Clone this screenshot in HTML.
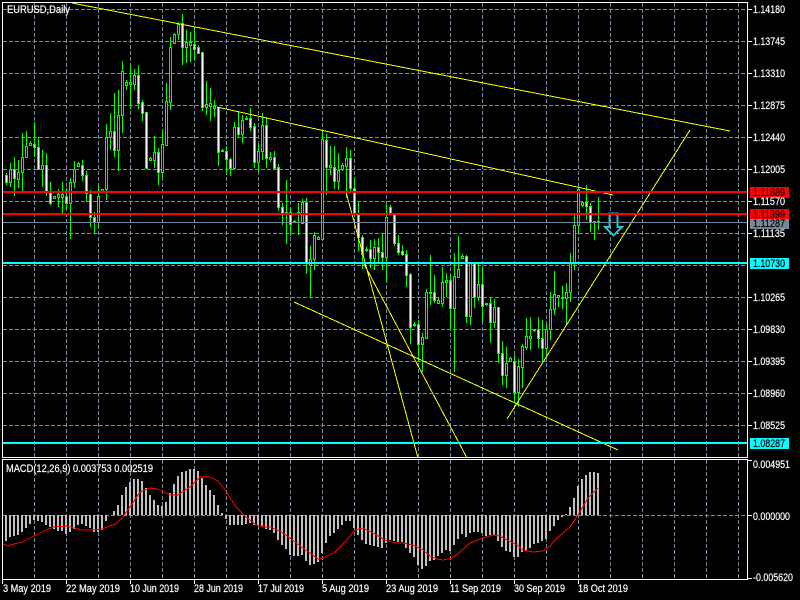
<!DOCTYPE html>
<html><head><meta charset="utf-8"><title>EURUSD,Daily</title>
<style>html,body{margin:0;padding:0;background:#000;width:800px;height:600px;overflow:hidden}svg{display:block}text{font-family:"Liberation Sans",sans-serif;font-size:11px;fill:#fff;stroke:#fff;stroke-width:.2px}.k{fill:#000;stroke:#000}</style></head>
<body>
<svg width="800" height="600" viewBox="0 0 800 600" xmlns="http://www.w3.org/2000/svg">
<rect width="800" height="600" fill="#000"/>
<g shape-rendering="crispEdges">
<path fill="none" stroke="#778899" stroke-dasharray="4 2" d="M34.5 3V457M66.5 3V457M98.5 3V457M130.5 3V457M162.5 3V457M194.5 3V457M226.5 3V457M258.5 3V457M290.5 3V457M322.5 3V457M354.5 3V457M386.5 3V457M418.5 3V457M450.5 3V457M482.5 3V457M514.5 3V457M546.5 3V457M578.5 3V457M610.5 3V457M642.5 3V457M674.5 3V457M706.5 3V457M738.5 3V457
M34.5 460V579M66.5 460V579M98.5 460V579M130.5 460V579M162.5 460V579M194.5 460V579M226.5 460V579M258.5 460V579M290.5 460V579M322.5 460V579M354.5 460V579M386.5 460V579M418.5 460V579M450.5 460V579M482.5 460V579M514.5 460V579M546.5 460V579M578.5 460V579M610.5 460V579M642.5 460V579M674.5 460V579M706.5 460V579M738.5 460V579
M3 9.5H747M3 41.5H747M3 73.5H747M3 105.5H747M3 137.5H747M3 169.5H747M3 201.5H747M3 233.5H747M3 265.5H747M3 297.5H747M3 329.5H747M3 361.5H747M3 393.5H747M3 425.5H747M3 515.5H747"/>
<!-- wicks -->
<path fill="none" stroke="#00ff00" d="M2.5 169V192M6.5 173V185M10.5 163V187M14.5 157V196M18.5 160V188M22.5 133V192M26.5 131V158M30.5 141V146M34.5 122V157M38.5 137V170M42.5 150V187M46.5 153V196M50.5 182V205M54.5 196V199M58.5 189V207M62.5 182V213M66.5 188V209M70.5 178V239M74.5 161V188M78.5 162V167M82.5 160V181M86.5 171V202M90.5 190V227M94.5 212V233M98.5 185V227M102.5 189V191M106.5 124V200M110.5 113V150M114.5 93V157M118.5 90V171M122.5 61V133M126.5 80V90M130.5 65V109M134.5 69V90M138.5 65V109M142.5 100V121M146.5 112V169M150.5 157V161M154.5 136V168M158.5 148V185M162.5 129V178M166.5 83V145M170.5 37V110M174.5 33V44M178.5 22V40M182.5 14V65M186.5 30V63M190.5 32V62M194.5 27V60M198.5 45V53M202.5 52V111M206.5 81V115M210.5 88V121M214.5 100V117M218.5 107V166M222.5 149V152M226.5 146V173M230.5 158V176M234.5 122V168M238.5 112V137M242.5 115V143M246.5 116V120M250.5 108V131M254.5 123V168M258.5 143V172M262.5 113V160M266.5 117V168M270.5 152V162M274.5 151V169M278.5 164V211M282.5 203V225M286.5 180V244M290.5 207V236M294.5 220V223M298.5 203V235M302.5 199V223M306.5 198V274M310.5 246V297M314.5 232V270M318.5 236V240M322.5 130V240M326.5 134V195M330.5 146V175M334.5 146V189M338.5 153V190M342.5 163V171M346.5 147V198M350.5 150V192M354.5 177V217M358.5 202V251M362.5 235V269M366.5 247V252M370.5 240V268M374.5 239V270M378.5 238V263M382.5 233V270M386.5 204V281M390.5 205V214M394.5 213V246M398.5 235V255M402.5 245V256M406.5 250V287M410.5 273V344M414.5 322V327M418.5 320V362M422.5 333V372M426.5 289V339M430.5 255V305M434.5 275V303M438.5 298V304M442.5 267V307M446.5 273V297M450.5 275V329M454.5 253V372M458.5 236V277M462.5 254V259M466.5 255V323M470.5 263V325M474.5 263V308M478.5 263V301M482.5 266V322M486.5 303V306M490.5 298V343M494.5 299V328M498.5 307V363M502.5 341V385M506.5 347V388M510.5 357V362M514.5 355V403M518.5 359V407M522.5 344V388M526.5 318V350M530.5 317V350M534.5 329V332M538.5 317V348M542.5 320V362M546.5 324V358M550.5 292V340M554.5 271V315M558.5 295V307M562.5 286V309M566.5 283V325M570.5 253V302M574.5 215V270M578.5 187V233M582.5 202V207M586.5 185V220M590.5 203V232M594.5 221V240M598.5 197V230"/>
<!-- bear (white) bodies -->
<path fill="#fff" stroke="#00ff00" d="M5.5 175.5h2V182.5h-2zM13.5 169.5h2V178.5h-2zM33.5 144.5h2V147.5h-2zM37.5 147.5h2V169.5h-2zM45.5 165.5h2V191.5h-2zM49.5 191.5h2V203.5h-2zM65.5 196.5h2V203.5h-2zM81.5 165.5h2V175.5h-2zM85.5 175.5h2V193.5h-2zM89.5 194.5h2V217.5h-2zM93.5 217.5h2V222.5h-2zM113.5 131.5h2V150.5h-2zM137.5 75.5h2V103.5h-2zM141.5 102.5h2V113.5h-2zM145.5 112.5h2V168.5h-2zM157.5 152.5h2V172.5h-2zM181.5 23.5h2V47.5h-2zM193.5 44.5h2V49.5h-2zM197.5 47.5h2V53.5h-2zM201.5 52.5h2V107.5h-2zM217.5 107.5h2V152.5h-2zM225.5 151.5h2V159.5h-2zM229.5 159.5h2V168.5h-2zM237.5 127.5h2V134.5h-2zM249.5 118.5h2V127.5h-2zM253.5 126.5h2V162.5h-2zM265.5 125.5h2V158.5h-2zM273.5 157.5h2V168.5h-2zM277.5 167.5h2V207.5h-2zM281.5 207.5h2V213.5h-2zM289.5 212.5h2V224.5h-2zM305.5 202.5h2V263.5h-2zM325.5 140.5h2V167.5h-2zM333.5 167.5h2V181.5h-2zM349.5 158.5h2V188.5h-2zM353.5 188.5h2V213.5h-2zM357.5 213.5h2V237.5h-2zM361.5 237.5h2V254.5h-2zM369.5 249.5h2V258.5h-2zM377.5 247.5h2V252.5h-2zM381.5 252.5h2V257.5h-2zM389.5 207.5h2V213.5h-2zM393.5 213.5h2V243.5h-2zM397.5 243.5h2V252.5h-2zM401.5 251.5h2V254.5h-2zM405.5 254.5h2V275.5h-2zM409.5 274.5h2V327.5h-2zM417.5 324.5h2V344.5h-2zM433.5 292.5h2V300.5h-2zM449.5 280.5h2V308.5h-2zM465.5 256.5h2V316.5h-2zM473.5 263.5h2V297.5h-2zM481.5 284.5h2V306.5h-2zM489.5 303.5h2V322.5h-2zM497.5 307.5h2V353.5h-2zM501.5 353.5h2V375.5h-2zM513.5 361.5h2V392.5h-2zM537.5 329.5h2V338.5h-2zM541.5 338.5h2V348.5h-2zM585.5 202.5h2V206.5h-2zM589.5 206.5h2V222.5h-2z"/>
<!-- bull (black) bodies -->
<path fill="#000" stroke="#00ff00" d="M9.5 169.5h2V182.5h-2zM17.5 172.5h2V179.5h-2zM21.5 157.5h2V172.5h-2zM25.5 146.5h2V157.5h-2zM29.5 143.5h2V145.5h-2zM41.5 165.5h2V169.5h-2zM53.5 196.5h2V198.5h-2zM57.5 194.5h2V197.5h-2zM61.5 194.5h2V197.5h-2zM69.5 182.5h2V203.5h-2zM73.5 169.5h2V182.5h-2zM77.5 163.5h2V166.5h-2zM97.5 196.5h2V222.5h-2zM101.5 189.5h2V191.5h-2zM105.5 137.5h2V189.5h-2zM109.5 131.5h2V137.5h-2zM117.5 115.5h2V150.5h-2zM121.5 71.5h2V115.5h-2zM125.5 82.5h2V85.5h-2zM129.5 82.5h2V84.5h-2zM133.5 75.5h2V84.5h-2zM149.5 158.5h2V160.5h-2zM153.5 152.5h2V160.5h-2zM161.5 144.5h2V172.5h-2zM165.5 101.5h2V145.5h-2zM169.5 47.5h2V102.5h-2zM173.5 34.5h2V43.5h-2zM177.5 24.5h2V34.5h-2zM185.5 42.5h2V47.5h-2zM189.5 42.5h2V45.5h-2zM205.5 104.5h2V107.5h-2zM209.5 103.5h2V106.5h-2zM213.5 106.5h2V108.5h-2zM221.5 150.5h2V151.5h-2zM233.5 127.5h2V168.5h-2zM241.5 120.5h2V134.5h-2zM245.5 118.5h2V119.5h-2zM257.5 151.5h2V162.5h-2zM261.5 125.5h2V151.5h-2zM269.5 157.5h2V159.5h-2zM285.5 212.5h2V214.5h-2zM293.5 221.5h2V222.5h-2zM297.5 212.5h2V213.5h-2zM301.5 202.5h2V223.5h-2zM309.5 259.5h2V265.5h-2zM313.5 235.5h2V259.5h-2zM317.5 237.5h2V239.5h-2zM321.5 139.5h2V239.5h-2zM329.5 165.5h2V167.5h-2zM337.5 170.5h2V181.5h-2zM341.5 165.5h2V169.5h-2zM345.5 158.5h2V166.5h-2zM365.5 249.5h2V250.5h-2zM373.5 247.5h2V258.5h-2zM385.5 217.5h2V257.5h-2zM413.5 324.5h2V325.5h-2zM421.5 337.5h2V344.5h-2zM425.5 292.5h2V338.5h-2zM429.5 292.5h2V293.5h-2zM437.5 300.5h2V303.5h-2zM441.5 282.5h2V303.5h-2zM445.5 280.5h2V282.5h-2zM453.5 276.5h2V308.5h-2zM457.5 269.5h2V277.5h-2zM461.5 256.5h2V258.5h-2zM469.5 263.5h2V316.5h-2zM477.5 284.5h2V297.5h-2zM485.5 303.5h2V304.5h-2zM493.5 307.5h2V322.5h-2zM505.5 363.5h2V375.5h-2zM509.5 358.5h2V361.5h-2zM517.5 366.5h2V392.5h-2zM521.5 346.5h2V367.5h-2zM525.5 336.5h2V347.5h-2zM529.5 336.5h2V338.5h-2zM533.5 329.5h2V330.5h-2zM545.5 329.5h2V348.5h-2zM549.5 309.5h2V329.5h-2zM553.5 294.5h2V309.5h-2zM557.5 295.5h2V297.5h-2zM561.5 297.5h2V298.5h-2zM565.5 292.5h2V298.5h-2zM569.5 263.5h2V292.5h-2zM573.5 225.5h2V263.5h-2zM577.5 189.5h2V225.5h-2zM581.5 202.5h2V205.5h-2zM593.5 221.5h2V222.5h-2zM597.5 221.5h2V222.5h-2z"/>
<!-- MACD histogram -->
<path fill="none" stroke="#c0c0c0" stroke-width="2" d="M6 515v26M10 515v22M14 515v21M18 515v20M22 515v17M26 515v13M30 515v9M34 515v5M38 515v6M42 515v7M46 515v10M50 515v12M54 515v14M58 515v16M62 515v16M66 515v19M70 515v17M74 515v14M78 515v10M82 515v9M86 515v11M90 515v13M94 515v17M98 515v17M102 515v15M106 515v6M114 515v-4M118 515v-10M122 515v-20M126 515v-28M130 515v-33M134 515v-36M138 515v-36M142 515v-34M146 515v-27M150 515v-20M154 515v-15M158 515v-10M162 515v-9M166 515v-13M170 515v-22M174 515v-31M178 515v-39M182 515v-43M186 515v-44M190 515v-46M194 515v-46M198 515v-44M202 515v-37M206 515v-30M210 515v-25M214 515v-20M218 515v-10M222 515v-2M226 515v4M230 515v10M234 515v10M238 515v10M242 515v10M246 515v9M250 515v8M254 515v10M258 515v11M262 515v11M266 515v14M270 515v15M274 515v18M278 515v25M282 515v30M286 515v34M290 515v40M294 515v41M298 515v41M302 515v40M306 515v46M310 515v50M314 515v49M318 515v47M322 515v38M326 515v28M330 515v21M334 515v18M338 515v14M342 515v10M346 515v6M350 515v6M354 515v13M358 515v20M362 515v25M366 515v29M370 515v30M374 515v31M378 515v32M382 515v33M386 515v28M390 515v25M394 515v26M398 515v27M402 515v27M406 515v33M410 515v38M414 515v42M418 515v50M422 515v54M426 515v51M430 515v46M434 515v45M438 515v41M442 515v38M446 515v35M450 515v36M454 515v30M458 515v24M462 515v19M466 515v22M470 515v18M474 515v17M478 515v17M482 515v18M486 515v21M490 515v20M494 515v20M498 515v26M502 515v32M506 515v36M510 515v37M514 515v42M518 515v42M522 515v37M526 515v35M530 515v33M534 515v29M538 515v28M542 515v26M546 515v24M550 515v16M554 515v11M558 515v5M562 515v2M566 515v-1M570 515v-8M574 515v-17M578 515v-29M582 515v-36M586 515v-40M590 515v-43M594 515v-43M598 515v-42"/>
<!-- MACD signal -->
<polyline fill="none" stroke="#ff0000" points="3,544 8,546 14,544 22,542 30,538 38,534 46,530 54,527 66,526 74,528 82,530 92,530 102,529 115,524 122,518 130,507 140,492 150,488 158,489 170,495 178,495 190,487 200,477 208,476 218,481 226,491 236,507 246,517 256,525 266,527 270,527 280,531 290,538 300,546 310,553 318,559 323,558 335,552 345,542 355,530 363,528 373,533 385,540 395,543 403,543 413,545 423,550 430,556 437,559 443,560 452,558 460,552 470,543 483,538 493,535 500,536 507,540 517,545 523,550 533,552 543,551 550,546 557,538 563,533 570,527 578,515 588,498 598,488"/>
<!-- yellow trend lines -->
<path fill="none" stroke="#ffff00" d="M72 3L730 131M217 107L613 195M346 192L418 458M363 262L467 458M294 302L618 450M507 419L690 130"/>
<!-- arrow -->
<path d="M609.5 213.5H617.5V227H622L613.5 235.5L605 227H609.5Z" fill="none" stroke="#22c4dc" stroke-width="2" shape-rendering="auto"/>
<!-- horizontal lines -->
<rect x="3" y="222" width="744" height="1" fill="#778899"/>
<rect x="3" y="191" width="744" height="2" fill="#ff0000"/>
<rect x="3" y="213" width="744" height="2" fill="#ff0000"/>
<rect x="3" y="262" width="744" height="2" fill="#00ffff"/>
<rect x="3" y="442" width="744" height="2" fill="#00ffff"/>
<!-- frame -->
<path fill="none" stroke="#fff" d="M2.5 2.5H747.5V457.5H2.5ZM2.5 459.5H747.5V579.5H2.5Z"/>
<!-- ticks -->
<path fill="none" stroke="#fff" d="M747 9.5h5M747 41.5h5M747 73.5h5M747 105.5h5M747 137.5h5M747 169.5h5M747 201.5h5M747 233.5h5M747 297.5h5M747 329.5h5M747 361.5h5M747 393.5h5M747 425.5h5M747 460.5h5M747 515.5h5M747 578.5h5M2.5 579v5M66.5 579v5M130.5 579v5M194.5 579v5M258.5 579v5M322.5 579v5M386.5 579v5M450.5 579v5M514.5 579v5M578.5 579v5"/>
<!-- label boxes -->
<rect x="750" y="187" width="39" height="11" fill="#ff0000"/>
<rect x="750" y="209" width="39" height="10" fill="#ff0000"/>
<rect x="750" y="219" width="39" height="10" fill="#778899"/>
<rect x="750" y="258" width="39" height="11" fill="#00ffff"/>
<rect x="750" y="438" width="39" height="11" fill="#00ffff"/>
</g>
<!-- text -->
<text x="7" y="13" textLength="63" lengthAdjust="spacingAndGlyphs">EURUSD,Daily</text>
<text x="6" y="472" textLength="147" lengthAdjust="spacingAndGlyphs">MACD(12,26,9) 0.003753 0.002519</text>
<g>
<text x="753" y="13" textLength="32" lengthAdjust="spacingAndGlyphs">1.14180</text>
<text x="753" y="45" textLength="32" lengthAdjust="spacingAndGlyphs">1.13745</text>
<text x="753" y="77" textLength="32" lengthAdjust="spacingAndGlyphs">1.13310</text>
<text x="753" y="109" textLength="32" lengthAdjust="spacingAndGlyphs">1.12875</text>
<text x="753" y="141" textLength="32" lengthAdjust="spacingAndGlyphs">1.12440</text>
<text x="753" y="173" textLength="32" lengthAdjust="spacingAndGlyphs">1.12005</text>
<text x="753" y="205" textLength="32" lengthAdjust="spacingAndGlyphs">1.11570</text>
<text x="753" y="237" textLength="32" lengthAdjust="spacingAndGlyphs">1.11135</text>
<text x="753" y="301" textLength="32" lengthAdjust="spacingAndGlyphs">1.10265</text>
<text x="753" y="333" textLength="32" lengthAdjust="spacingAndGlyphs">1.09830</text>
<text x="753" y="365" textLength="32" lengthAdjust="spacingAndGlyphs">1.09395</text>
<text x="753" y="397" textLength="32" lengthAdjust="spacingAndGlyphs">1.08960</text>
<text x="753" y="429" textLength="32" lengthAdjust="spacingAndGlyphs">1.08525</text>
<text class="k" x="753" y="196" textLength="32" lengthAdjust="spacingAndGlyphs">1.11689</text>
<text class="k" x="753" y="218" textLength="32" lengthAdjust="spacingAndGlyphs">1.11399</text>
<text class="k" x="753" y="227" textLength="32" lengthAdjust="spacingAndGlyphs">1.11287</text>
<text class="k" x="753" y="267" textLength="32" lengthAdjust="spacingAndGlyphs">1.10730</text>
<text class="k" x="753" y="447" textLength="32" lengthAdjust="spacingAndGlyphs">1.08287</text>
<text x="753" y="468" textLength="37" lengthAdjust="spacingAndGlyphs">0.004951</text>
<text x="753" y="520" textLength="37" lengthAdjust="spacingAndGlyphs">0.000000</text>
<text x="753" y="581" textLength="40" lengthAdjust="spacingAndGlyphs">-0.005620</text>
<text x="3" y="592" textLength="48" lengthAdjust="spacingAndGlyphs">3 May 2019</text>
<text x="66" y="592" textLength="54" lengthAdjust="spacingAndGlyphs">22 May 2019</text>
<text x="130" y="592" textLength="49" lengthAdjust="spacingAndGlyphs">10 Jun 2019</text>
<text x="194" y="592" textLength="49" lengthAdjust="spacingAndGlyphs">28 Jun 2019</text>
<text x="258" y="592" textLength="46" lengthAdjust="spacingAndGlyphs">17 Jul 2019</text>
<text x="322" y="592" textLength="47" lengthAdjust="spacingAndGlyphs">5 Aug 2019</text>
<text x="386" y="592" textLength="52" lengthAdjust="spacingAndGlyphs">23 Aug 2019</text>
<text x="450" y="592" textLength="51" lengthAdjust="spacingAndGlyphs">11 Sep 2019</text>
<text x="514" y="592" textLength="51" lengthAdjust="spacingAndGlyphs">30 Sep 2019</text>
<text x="578" y="592" textLength="50" lengthAdjust="spacingAndGlyphs">18 Oct 2019</text>
</g>
</svg>
</body></html>
